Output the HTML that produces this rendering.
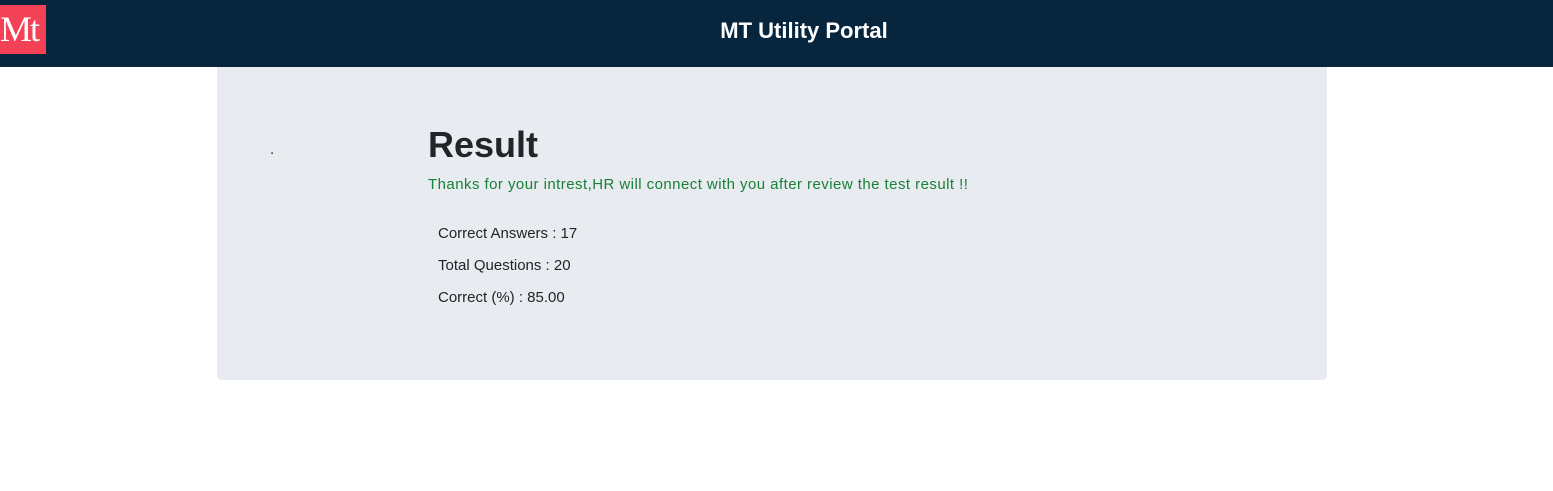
<!DOCTYPE html>
<html><head><style>
body{margin:0;width:1553px;height:491px;background:#fff;font-family:"Liberation Sans",sans-serif;position:relative;overflow:hidden}
.hdr{position:absolute;left:0;top:0;width:1553px;height:67px;background:#07263e}
.logo{position:absolute;left:0;top:5px;width:46px;height:49px;background:#f34256;color:#fff;font-family:"Liberation Serif",serif;font-size:36px;line-height:49px;letter-spacing:-2px}
.title{position:absolute;left:0;width:1608px;text-align:center;top:18px;color:#fff;font-weight:bold;font-size:22px}
.card{position:absolute;left:217px;top:67px;width:1110px;height:313px;background:#e8ebef;border-radius:0 0 4px 4px}
.t{position:absolute;color:#212529;font-size:15px}
</style></head><body>
<div class="hdr"><div class="logo">Mt</div><div class="title">MT Utility Portal</div></div>
<div class="card"></div>
<div class="t" style="left:270px;top:141px">.</div>
<div class="t" style="left:428px;top:124px;font-size:36px;font-weight:bold">Result</div>
<div class="t" style="left:428px;top:176px;color:#198038;font-size:15px;letter-spacing:0.45px">Thanks for your intrest,HR will connect with you after review the test result !!</div>
<div class="t" style="left:438px;top:225px">Correct Answers : 17</div>
<div class="t" style="left:438px;top:257px">Total Questions : 20</div>
<div class="t" style="left:438px;top:289px">Correct (%) : 85.00</div>
</body></html>
